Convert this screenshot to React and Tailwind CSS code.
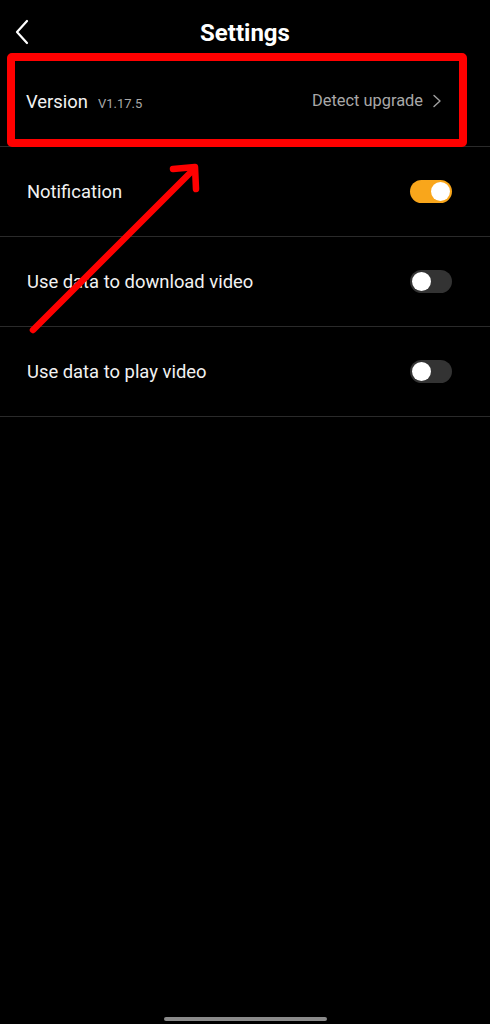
import React, { useState } from 'react';

const Toggle = ({ on, onClick }) => (
    <button
        onClick={onClick}
        className={`relative w-[42px] h-[23px] rounded-full flex items-center px-[2px] ${on ? 'bg-[#f9a61b] justify-end' : 'bg-[#333333] justify-start'}`}
    >
        <span className="block w-[19px] h-[19px] rounded-full bg-white" />
    </button>
);

const Settings = () => {
    const [toggles, setToggles] = useState({
        notification: true,
        downloadData: false,
        playData: false,
    });

    const flip = (key) => setToggles({ ...toggles, [key]: !toggles[key] });

    const rows = [
        { key: 'notification', label: 'Notification' },
        { key: 'downloadData', label: 'Use data to download video' },
        { key: 'playData', label: 'Use data to play video' },
    ];

    return (
        <div
            className="relative min-h-[1024px] w-full bg-black text-white flex flex-col overflow-hidden"
            style={{ fontFamily: 'Roboto, "Noto Sans", sans-serif' }}
        >
            {/* header */}
            <div className="relative h-[57px] flex items-center justify-center">
                <button className="absolute left-[14px] top-[19px]">
                    <svg width="18" height="26" viewBox="0 0 18 26" fill="none">
                        <path d="M13 2 L3 13 L13 24" stroke="white" strokeWidth="2.2" strokeLinecap="round" strokeLinejoin="round" />
                    </svg>
                </button>
                <h1 className="text-[24px] font-bold leading-none mt-[8px]">Settings</h1>
            </div>

            {/* version */}
            <div className="h-[90px] flex items-center justify-between pl-[26px] pr-[48px] border-b border-[#2a2a2a]">
                <div className="flex items-baseline">
                    <span className="text-[18.4px] text-[#f2f2f2]">Version</span>
                    <span className="ml-[10px] text-[13px] text-[#a8a8a8]">V1.17.5</span>
                </div>
                <div className="flex items-center">
                    <span className="text-[16.4px] text-[#a8a8a8]">Detect upgrade</span>
                    <svg className="ml-[9px]" width="10" height="14" viewBox="0 0 10 14" fill="none">
                        <path d="M2 1.5 L8 7 L2 12.5" stroke="#a0a0a0" strokeWidth="1.4" strokeLinecap="round" strokeLinejoin="round" />
                    </svg>
                </div>
            </div>

            {rows.map((row) => (
                <div key={row.key} className="h-[90px] flex items-center justify-between pl-[27px] pr-[38px] border-b border-[#2a2a2a]">
                    <span className="text-[18.4px] text-[#f2f2f2]">{row.label}</span>
                    <Toggle on={toggles[row.key]} onClick={() => flip(row.key)} />
                </div>
            ))}

            <div className="mt-auto flex justify-center pb-[3px]">
                <div className="w-[163px] h-[4px] rounded-full bg-[#8a8a8a]" />
            </div>

            {/* annotation overlay */}
            <div className="absolute left-[7px] top-[53px] w-[460px] h-[94px] border-[8px] border-[#ff0000] rounded-[5px] pointer-events-none" />
            <svg className="absolute left-0 top-0 pointer-events-none" width="490" height="1024" viewBox="0 0 490 1024">
                <path d="M33 330 L194 169" stroke="#ff0000" strokeWidth="6.5" strokeLinecap="round" fill="none" />
                <path d="M173 169 L195 167 L196 189" stroke="#ff0000" strokeWidth="6.5" strokeLinecap="round" strokeLinejoin="round" fill="none" />
            </svg>
        </div>
    );
};

export default Settings;
